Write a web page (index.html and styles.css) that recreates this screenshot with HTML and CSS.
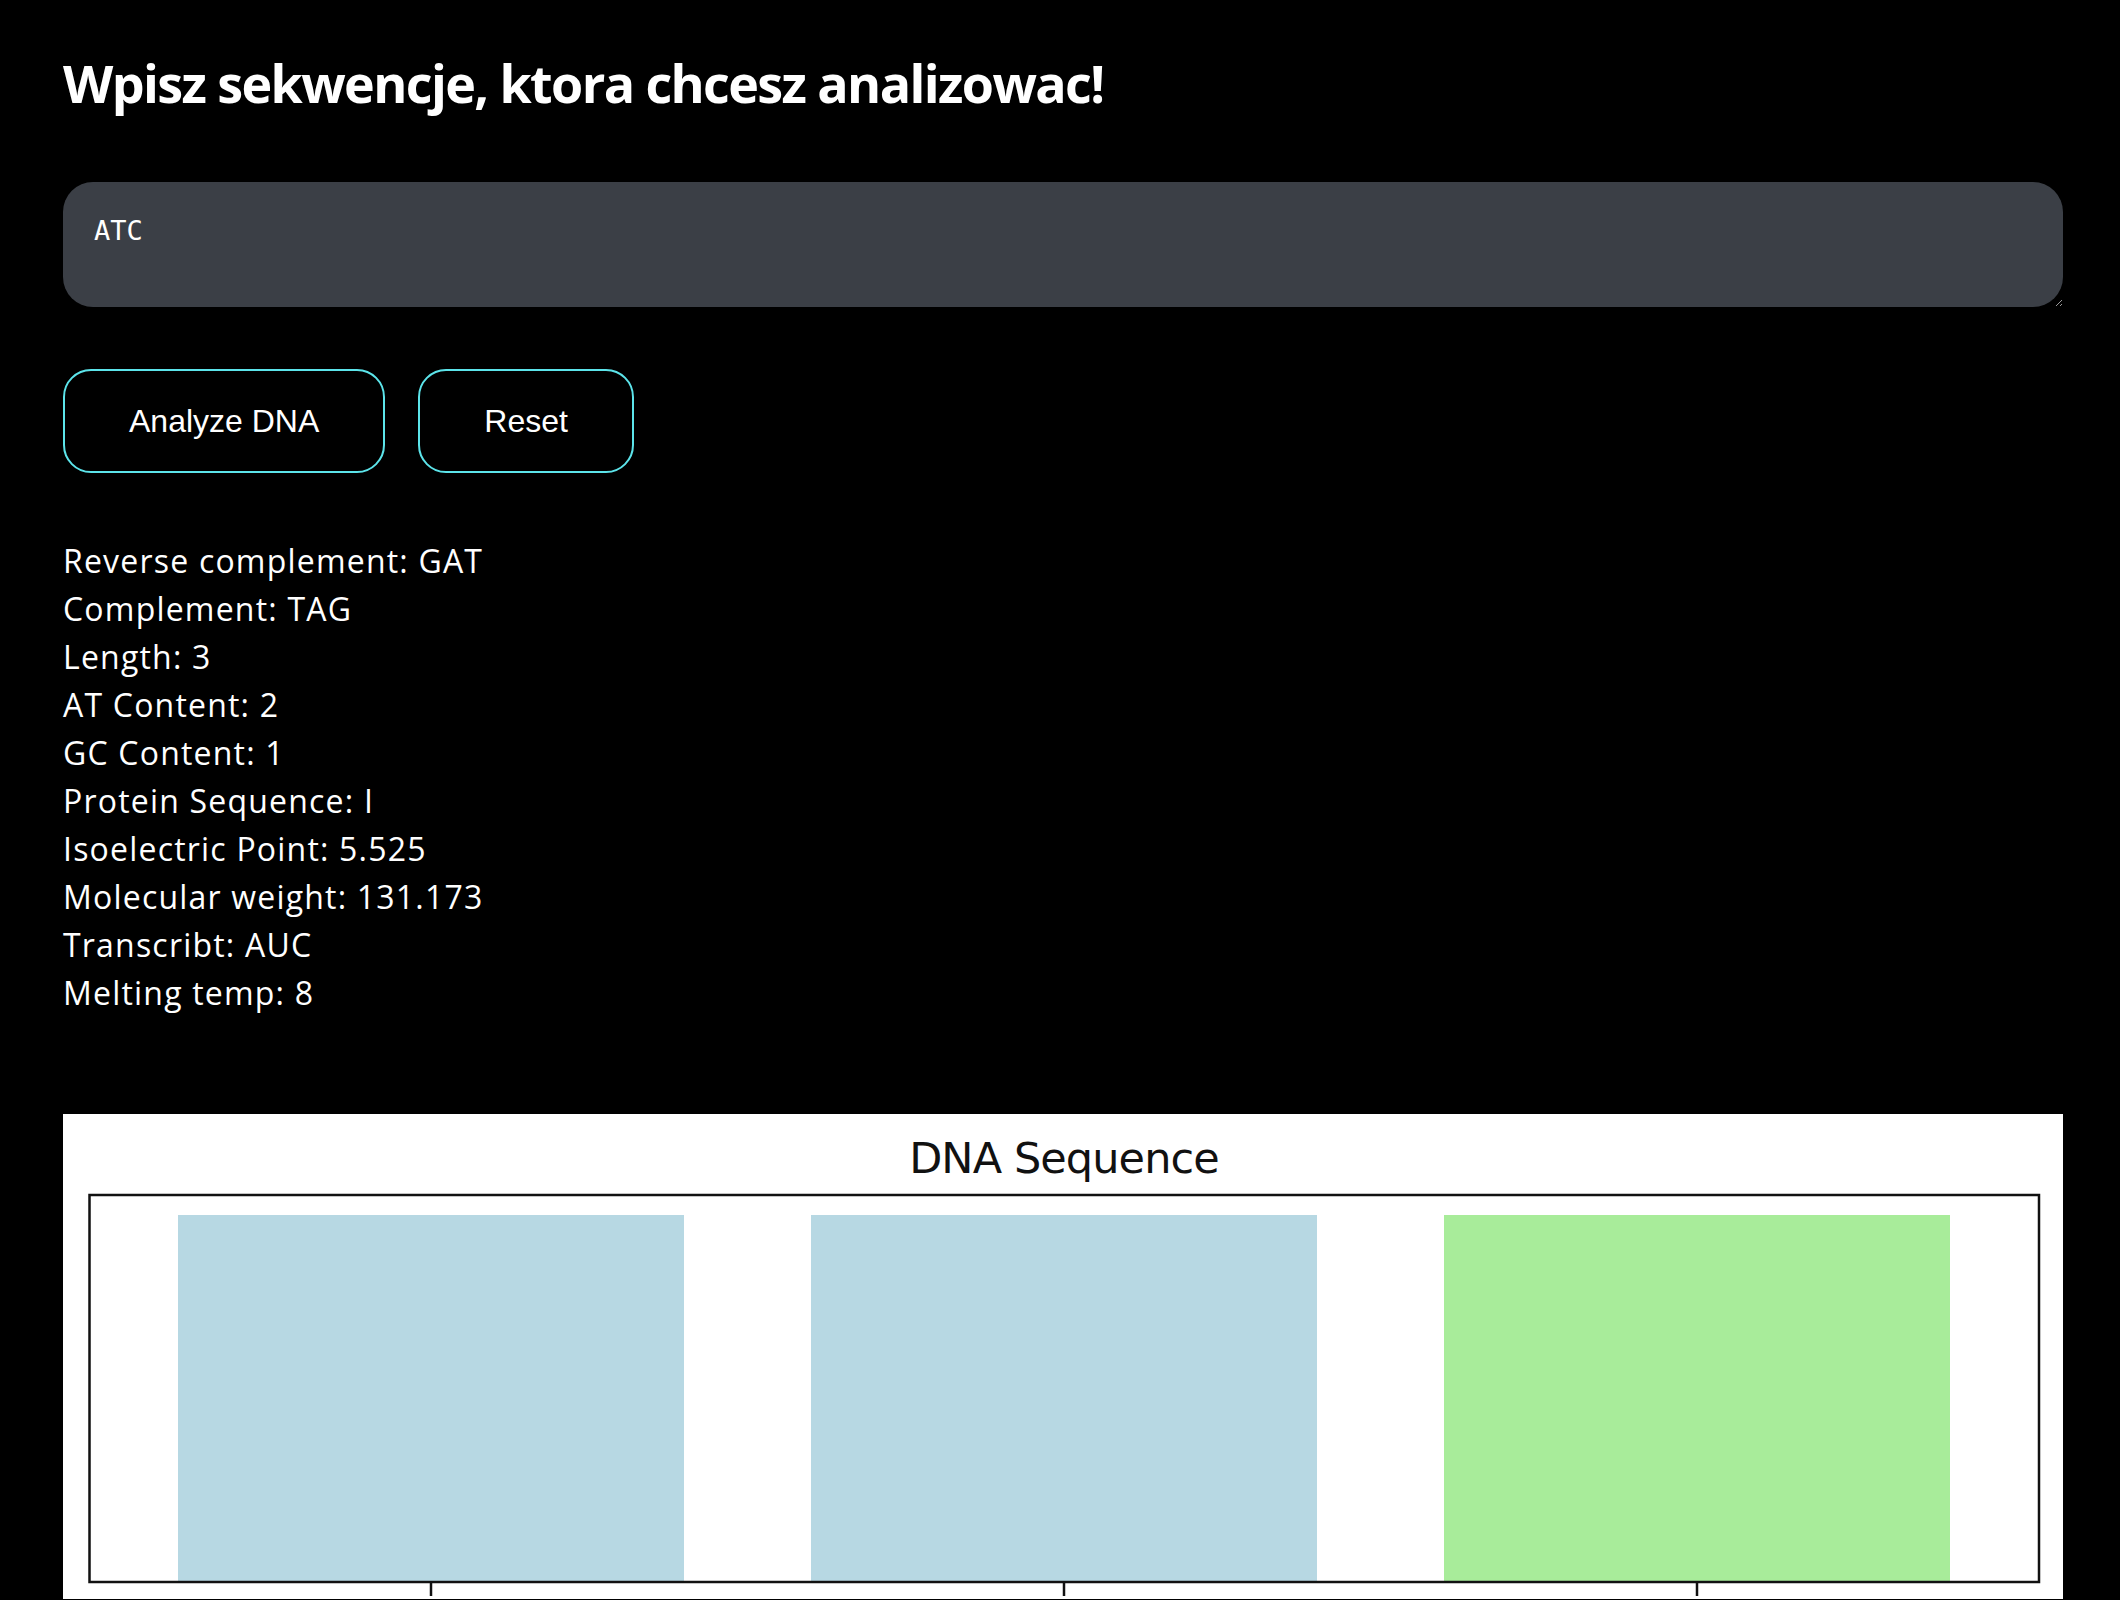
FILE: index.html
```html
<!DOCTYPE html>
<html lang="pl">
<head>
<meta charset="utf-8">
<title>DNA Analyzer</title>
<link rel="stylesheet" href="styles.css">
</head>
<body>
<main class="page">
  <h1 class="title">Wpisz sekwencje, ktora chcesz analizowac!</h1>
  <textarea class="seq-input">ATC</textarea>
  <div class="actions">
    <button class="btn">Analyze DNA</button>
    <button class="btn">Reset</button>
  </div>
  <div class="results">
    <p>Reverse complement: GAT</p>
    <p>Complement: TAG</p>
    <p>Length: 3</p>
    <p>AT Content: 2</p>
    <p>GC Content: 1</p>
    <p>Protein Sequence: I</p>
    <p>Isoelectric Point: 5.525</p>
    <p>Molecular weight: 131.173</p>
    <p>Transcribt: AUC</p>
    <p>Melting temp: 8</p>
  </div>
  <div class="chart">
    <svg class="chart-svg" viewBox="0 0 2000 485" width="2000" height="485" xmlns="http://www.w3.org/2000/svg">
      <rect x="0" y="0" width="2000" height="485" fill="#ffffff"/>
      <text class="chart-title" x="1001" y="59" text-anchor="middle">DNA Sequence</text>
      <rect x="115" y="101" width="506" height="367" fill="#b7d8e3"/>
      <rect x="748" y="101" width="506" height="367" fill="#b7d8e3"/>
      <rect x="1381" y="101" width="506" height="367" fill="#a8ec9a"/>
      <rect x="26.5" y="81" width="1949.5" height="387" fill="none" stroke="#111" stroke-width="2.5"/>
      <line x1="368" y1="468" x2="368" y2="482" stroke="#111" stroke-width="2.5"/>
      <line x1="1001" y1="468" x2="1001" y2="482" stroke="#111" stroke-width="2.5"/>
      <line x1="1634" y1="468" x2="1634" y2="482" stroke="#111" stroke-width="2.5"/>
    </svg>
  </div>
</main>
</body>
</html>
```

FILE: styles.css
```css
html, body {
  margin: 0;
  padding: 0;
  background: #000;
}

.page {
  width: 2000px;
  margin-left: 63px;
  display: flex;
  flex-direction: column;
  align-items: flex-start;
  color: #fff;
  font-family: "Open Sans", "Liberation Sans", sans-serif;
}

.title {
  margin: 52px 0 0 0;
  font-family: "Open Sans", sans-serif;
  font-weight: 700;
  font-size: 52px;
  line-height: 1.2;
  letter-spacing: -1.6px;
  color: #fff;
}

.seq-input {
  box-sizing: border-box;
  margin-top: 68px;
  width: 2000px;
  height: 125px;
  padding: 33px 31px;
  border: none;
  border-radius: 30px;
  background: #3b3f46;
  color: #fff;
  font-family: "DejaVu Sans Mono", monospace;
  font-size: 27px;
  line-height: normal;
  outline: none;
}

.actions {
  display: flex;
  gap: 33px;
  margin-top: 62px;
}

.btn {
  box-sizing: border-box;
  height: 104px;
  padding: 0 64px;
  border: 2px solid #5ce4ea;
  border-radius: 28px;
  background: #000;
  color: #fff;
  font-family: "Liberation Sans", Arial, sans-serif;
  font-size: 32px;
}

.results {
  margin-top: 64px;
}

.results p {
  margin: 0;
  font-size: 32px;
  line-height: 48px;
  letter-spacing: 1.2px;
}

.chart {
  margin-top: 97px;
  width: 2000px;
  display: block;
}

.chart-svg {
  display: block;
}

.chart-title {
  font-family: "DejaVu Sans", sans-serif;
  font-size: 43px;
  letter-spacing: -0.9px;
  fill: #111;
}
```
